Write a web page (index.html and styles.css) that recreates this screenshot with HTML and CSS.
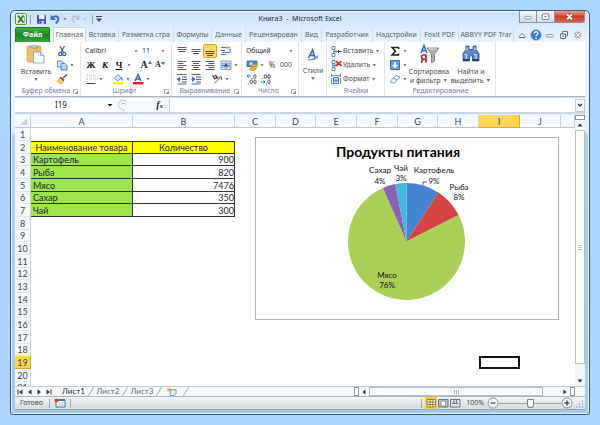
FILE: index.html
```
<!DOCTYPE html>
<html lang="ru">
<head>
<meta charset="utf-8">
<title>Книга3 - Microsoft Excel</title>
<link rel="stylesheet" href="styles.css">
</head>
<body>
<main class="window">
  <header class="titlebar">
    <div class="quick">
      <svg class="icon" viewBox="0 0 12 12"><rect x=".5" y=".5" width="11" height="11" rx="1.5" fill="#eef8ea" stroke="#4f9d4a"/><path d="M3 2.5L8.5 9.5M8.5 2.5L3 9.5" stroke="#23892b" stroke-width="2"/><path d="M9.500 3v7" stroke="#8cc487"/></svg>
      <i class="bar"></i>
      <button class="ico" aria-label="Сохранить"><svg class="icon" viewBox="0 0 12 12"><path d="M2 2h9v9H3L2 10z" fill="#4b52c4"/><path d="M4 2h5.500v4H4z" fill="#eef2fb"/><path d="M4.500 8h4.500v3h-4.500z" fill="#c9cfe6"/><path d="M5 8.500h1.500v2H5z" fill="#2c3191"/></svg></button>
      <button class="ico" aria-label="Отменить"><svg class="icon" viewBox="0 0 12 12"><path d="M3.500 4.500C8 1.500 11 5 8.500 8.500L6.500 10.500" fill="none" stroke="#3d72d9" stroke-width="2"/><path d="M1.500 1.500v5.500H7z" fill="#3d72d9"/></svg></button>
      <i class="caret"></i>
      <button class="ico" aria-label="Вернуть"><svg class="icon" viewBox="0 0 12 12"><path d="M9 4C5 1.500 2 5 4 8.500L6 10" fill="none" stroke="#b9c3d0" stroke-width="1.600"/><path d="M10.500 2v5H6z" fill="#b9c3d0"/></svg></button>
      <i class="caret caret-dim"></i>
      <i class="bar bar-end"></i>
      <button class="ico" aria-label="Настройка панели"><svg class="icon" viewBox="0 0 12 12"><path d="M1 3.500h6" stroke="#445"/><path d="M1 5.500h6L4 9z" fill="#445"/></svg></button>
    </div>
    <h1 class="title">Книга3 &nbsp;-&nbsp; Microsoft Excel</h1>
    <div class="winbtns">
      <button class="wb" aria-label="Свернуть"><svg viewBox="0 0 18 12"><rect x="5.500" y="6" width="7" height="3" rx="1" fill="#fff" stroke="#67727f" stroke-width=".8"/></svg></button>
      <button class="wb" aria-label="Развернуть"><svg viewBox="0 0 18 12"><rect x="5.500" y="3" width="7" height="6" rx="1" fill="#fff" stroke="#67727f"/><rect x="8" y="5.200" width="2" height="1.600" fill="#67727f"/></svg></button>
      <button class="wb wb-close" aria-label="Закрыть"><svg viewBox="0 0 30 12"><path d="M12.500 3.500l5 5M17.500 3.500l-5 5" stroke="#6d3a3a" stroke-width="3.200"/><path d="M12.500 3.500l5 5M17.500 3.500l-5 5" stroke="#fff" stroke-width="2"/></svg></button>
    </div>
  </header>

  <nav class="tabs">
    <button class="tab tab-file">Файл</button>
    <button class="tab tab-active">Главная</button>
    <button class="tab">Вставка</button>
    <button class="tab">Разметка стра</button>
    <button class="tab">Формулы</button>
    <button class="tab">Данные</button>
    <button class="tab">Рецензирован</button>
    <button class="tab">Вид</button>
    <button class="tab">Разработчик</button>
    <button class="tab">Надстройки</button>
    <button class="tab">Foxit PDF</button>
    <button class="tab">ABBYY PDF Trar</button>
    <div class="tabtools">
      <svg class="icon" viewBox="0 0 12 12"><path d="M3 7.500L6 4.500l3 3v1H3z" fill="#fff" stroke="#6b7683"/></svg>
      <svg class="icon" viewBox="0 0 12 12"><circle cx="6" cy="6" r="5.300" fill="#2f78dc" stroke="#7fb0ee" stroke-width=".8"/><path d="M4.200 4.600c0-2.500 3.800-2.300 3.700 0C7.900 5.900 6.100 5.900 6.100 7.300" fill="none" stroke="#fff" stroke-width="1.400"/><circle cx="6.100" cy="9.100" r=".9" fill="#fff"/></svg>
      <svg class="icon" viewBox="0 0 12 12"><rect x="2.500" y="5.500" width="7" height="2.500" rx=".8" fill="#fff" stroke="#6b7683" stroke-width=".8"/></svg>
      <svg class="icon" viewBox="0 0 12 12"><path d="M4.500 2.500h5v4.500h-5z" fill="#fff" stroke="#6b7683"/><path d="M2.500 5h5v4.500h-5z" fill="#fff" stroke="#6b7683"/><path d="M4 7.200h2" stroke="#6b7683"/></svg>
      <svg class="icon" viewBox="0 0 12 12"><path d="M3.500 3.500l5 5M8.500 3.500l-5 5" stroke="#6b7683" stroke-width="3"/><path d="M3.500 3.500l5 5M8.500 3.500l-5 5" stroke="#fff" stroke-width="1.300"/></svg>
    </div>
  </nav>

  <section class="ribbon">
    <div class="group">
      <div class="body clip">
        <button class="big big-paste"><svg viewBox="0 0 20 20"><rect x="1" y="2" width="14" height="16" rx="1" fill="#f1bd62" stroke="#d59a3c" stroke-width=".6"/><path d="M4.500 4V2.200H6.500a1.600 1.600 0 0 1 3 0h2V4z" fill="#d7d9dc" stroke="#7b838c" stroke-width=".6"/><path d="M7.500 8h7l3.500 3.500V19H7.500z" fill="#fbfdff" stroke="#6d9ad0" stroke-width=".8"/><path d="M14.500 8v3.500H18" fill="#cfe1f6" stroke="#6d9ad0" stroke-width=".8"/></svg><span>Вставить</span><i class="caret"></i></button>
        <div class="stack">
          <div class="row"><button class="ico" aria-label="Вырезать"><svg class="icon" viewBox="0 0 12 12"><path d="M4 1l3.500 6.500M8.500 1L5 7.500" stroke="#45658f" stroke-width="1.200"/><circle cx="4.200" cy="9" r="1.600" fill="none" stroke="#2c62c0" stroke-width="1.200"/><circle cx="8.200" cy="9" r="1.600" fill="none" stroke="#2c62c0" stroke-width="1.200"/></svg></button></div>
          <div class="row"><button class="ico" aria-label="Копировать"><svg class="icon" viewBox="0 0 12 12"><path d="M1.500 2h4l1.500 1.500V8H1.500z" fill="#dceafa" stroke="#3f78c9" stroke-width=".9"/><path d="M5 4.500h4l2 2V11H5z" fill="#b9d4f5" stroke="#3f78c9" stroke-width=".9"/></svg></button><i class="caret"></i></div>
          <div class="row"><button class="ico" aria-label="Формат по образцу"><svg class="icon" viewBox="0 0 12 12"><path d="M11 1.500L7 5" stroke="#8a5a2a" stroke-width="1.600"/><path d="M5 3.500l3.500 3.500-1 1.500-4-3.500z" fill="#555a66"/><path d="M4 5L7.500 8.500 5 11 1 8z" fill="#f7d04a" stroke="#c9941f" stroke-width=".6"/></svg></button></div>
        </div>
      </div>
      <div class="label">Буфер обмена<i class="launch"></i></div>
    </div>

    <div class="group">
      <div class="body stack">
        <div class="row"><select class="pick pick-font" aria-label="Шрифт"><option>Calibri</option></select><i class="caret"></i><select class="pick pick-size" aria-label="Размер"><option>11</option></select><i class="caret"></i></div>
        <div class="row"><button class="ico"><b>Ж</b></button><button class="ico"><b><em>К</em></b></button><button class="ico"><b><u>Ч</u></b></button><i class="caret"></i><i class="gap"></i><button class="ico glyph" aria-label="Увеличить размер">A<svg viewBox="0 0 4 8"><path d="M0 3L2 0l2 3z" fill="#2f6fd0"/></svg></button><button class="ico glyph glyph-s" aria-label="Уменьшить размер">A<svg viewBox="0 0 4 8"><path d="M0 1h4L2 4z" fill="#2f6fd0"/></svg></button></div>
        <div class="row"><button class="ico" aria-label="Границы"><svg class="icon" viewBox="0 0 12 12"><path d="M2 2h8v8M2 2v8M6 2v8M2 6h8" fill="none" stroke="#b8bec6" stroke-width=".9" stroke-dasharray="1 1"/><path d="M1.500 10.500h9" stroke="#444"/></svg></button><i class="caret"></i><i class="gap"></i><button class="ico" aria-label="Цвет заливки"><svg class="icon" viewBox="0 0 12 12"><path d="M2.500 5L6 1.500 9 5 5.500 8z" fill="#dfeafa" stroke="#4576b8" stroke-width=".9"/><path d="M9.500 4c1.500 1.200 1.500 2.500 1 4-1-1-1.500-2-1-4z" fill="#3572d0"/><path d="M1 9h10.500v2.500H1z" fill="#fff200"/></svg></button><i class="caret"></i><button class="ico" aria-label="Цвет текста"><svg class="icon" viewBox="0 0 12 12"><path d="M3 8L6 1.500 9 8M4.200 6h3.600" fill="none" stroke="#3d5fa8" stroke-width="1.500"/><path d="M1 9h10.500v2.500H1z" fill="#ee1c1c"/></svg></button><i class="caret"></i></div>
      </div>
      <div class="label">Шрифт<i class="launch"></i></div>
    </div>

    <div class="group">
      <div class="body stack">
        <div class="row"><button class="ico" aria-label="По верхнему краю"><svg class="icon" viewBox="0 0 12 12"><path d="M1.500 2.500h9M1.500 4.500h9M3 6.500h6" stroke="#5a6068"/></svg></button><button class="ico" aria-label="По середине"><svg class="icon" viewBox="0 0 12 12"><path d="M1.500 4.500h9M1.500 6.500h9M3 8.500h6" stroke="#5a6068"/></svg></button><button class="ico ico-on" aria-label="По нижнему краю"><svg class="icon" viewBox="0 0 12 12"><path d="M1.500 6.500h9M1.500 8.500h9M3 10.500h6" stroke="#5d4a10"/></svg></button><i class="thin"></i><button class="ico" aria-label="Перенос текста"><svg class="icon" viewBox="0 0 12 12"><path d="M1 2.500h9M1 5.500h4M1 9.500h5" stroke="#666c78"/><path d="M2 7.500h6.500c2.500 0 2.500-3.500 0-3.500" fill="none" stroke="#4b82c9" stroke-width="1.200"/><path d="M6.500 1v3l3-1.500z" fill="#e5a13c"/></svg></button></div>
        <div class="row"><button class="ico" aria-label="По левому краю"><svg class="icon" viewBox="0 0 12 12"><path d="M1.500 2.500h9M1.500 4.500h6M1.500 6.500h9M1.500 8.500h6M1.500 10.500h9" stroke="#5a6068"/></svg></button><button class="ico" aria-label="По центру"><svg class="icon" viewBox="0 0 12 12"><path d="M1.500 2.500h9M3 4.500h6M1.500 6.500h9M3 8.500h6M1.500 10.500h9" stroke="#5a6068"/></svg></button><button class="ico" aria-label="По правому краю"><svg class="icon" viewBox="0 0 12 12"><path d="M1.500 2.500h9M4.500 4.500h6M1.500 6.500h9M4.500 8.500h6M1.500 10.500h9" stroke="#5a6068"/></svg></button><i class="thin"></i><button class="ico" aria-label="Объединить"><svg class="icon" viewBox="0 0 12 12"><path d="M1 2h10v8.500H1z" fill="#dbe8f8" stroke="#7795bf" stroke-width=".9"/><path d="M1 4.500h10M1 8h10M6 2v2.500M6 8v2.500" stroke="#7795bf" stroke-width=".8"/><path d="M2 6.300h8" stroke="#2860b8"/><path d="M5 7.800L6 5l1 2.800" fill="none" stroke="#234" stroke-width=".9"/></svg></button><i class="caret"></i></div>
        <div class="row"><button class="ico" aria-label="Уменьшить отступ"><svg class="icon" viewBox="0 0 12 12"><path d="M1.500 1.500h9M6 4h5M6 6.500h5M6 9h5M1.500 11h9" stroke="#5a6068"/><path d="M5 6.300H2M3.500 4L1 6.300 3.500 8.600z" fill="#2f6fd0" stroke="#2f6fd0" stroke-width=".8"/></svg></button><button class="ico" aria-label="Увеличить отступ"><svg class="icon" viewBox="0 0 12 12"><path d="M1.500 1.500h9M6 4h5M6 6.500h5M6 9h5M1.500 11h9" stroke="#5a6068"/><path d="M1 6.300h3M2.500 4L5 6.300 2.500 8.600z" fill="#2f6fd0" stroke="#2f6fd0" stroke-width=".8"/></svg></button><i class="gap"></i><button class="ico" aria-label="Ориентация"><svg class="icon" viewBox="0 0 12 12"><path d="M3 10.500L10.500 4M10.500 4H7.500M10.500 4v3" fill="none" stroke="#6b7077"/><path d="M1.500 2.500l2 3M4.500 2l2.500 4M2 4c1.500-1.500 3-1.500 4-.5M3 6c1.500-1 2.500-1 4-1.500" fill="none" stroke="#33383e" stroke-width="1.100"/></svg></button><i class="caret"></i></div>
      </div>
      <div class="label">Выравнивание<i class="launch"></i></div>
    </div>

    <div class="group">
      <div class="body stack">
        <div class="row"><select class="pick pick-format" aria-label="Числовой формат"><option>Общий</option></select><i class="caret"></i></div>
        <div class="row"><button class="ico" aria-label="Финансовый формат"><svg class="icon" viewBox="0 0 12 12"><path d="M1 2h10v5.500H1z" fill="#4f86cf" stroke="#2a579a" stroke-width=".7"/><circle cx="5" cy="4.700" r="1.600" fill="#d9e8fb"/><ellipse cx="8.500" cy="6.500" rx="3" ry="1.300" fill="#f3c13a" stroke="#a87b12" stroke-width=".6"/><ellipse cx="8" cy="8.500" rx="3" ry="1.300" fill="#f3c13a" stroke="#a87b12" stroke-width=".6"/><ellipse cx="6.500" cy="10.300" rx="3" ry="1.300" fill="#f3c13a" stroke="#a87b12" stroke-width=".6"/></svg></button><i class="caret"></i><button class="ico percent">%</button><button class="ico">000</button></div>
        <div class="row"><button class="ico" aria-label="Увеличить разрядность"><svg class="icon" viewBox="0 0 12 12"><path d="M1 3h4M2.500 1.500L1 3l1.500 1.500" fill="none" stroke="#2f6fd0"/><g fill="none" stroke="#444a52" stroke-width=".9"><ellipse cx="8.800" cy="3.500" rx="1.200" ry="1.900"/><ellipse cx="5.300" cy="8.800" rx="1.200" ry="1.900"/><ellipse cx="9" cy="8.800" rx="1.200" ry="1.900"/><path d="M2.300 10.500v1M6 5v1"/></g></svg></button><button class="ico" aria-label="Уменьшить разрядность"><svg class="icon" viewBox="0 0 12 12"><path d="M1 9h4M3.500 7.500L5 9l-1.500 1.500" fill="none" stroke="#2f6fd0"/><g fill="none" stroke="#444a52" stroke-width=".9"><ellipse cx="5.300" cy="3.500" rx="1.200" ry="1.900"/><ellipse cx="9" cy="3.500" rx="1.200" ry="1.900"/><ellipse cx="9" cy="8.800" rx="1.200" ry="1.900"/><path d="M2.300 5v1M6.500 10.500v1"/></g></svg></button></div>
      </div>
      <div class="label">Число<i class="launch"></i></div>
    </div>

    <div class="group">
      <button class="big big-styles"><svg viewBox="0 0 14 14"><path d="M2.500 10L6.500 2 9 10M4 7.500h4" fill="none" stroke="#3765b5" stroke-width="1.600"/><path d="M8 9.500L12 7v3l-4 2z" fill="#6fa0e4"/><path d="M2 11.500c3 1.500 4-1 7-.5" fill="none" stroke="#4a82d2" stroke-width="1.200"/></svg><span>Стили</span><i class="caret"></i></button>
      <div class="label"></div>
    </div>

    <div class="group">
      <div class="body stack">
        <div class="row"><button class="cmd"><svg class="icon" viewBox="0 0 12 12"><path d="M2 1.500h3v3H2zM2 8.500h3v3H2z" fill="#fff" stroke="#5e7ba8" stroke-width=".9"/><path d="M3 5.500h4v2H3z" fill="#4a86d6"/><path d="M8 6.500h3.500M9 5L7.500 6.500 9 8" fill="none" stroke="#334a6b"/></svg>Вставить<i class="caret"></i></button></div>
        <div class="row"><button class="cmd"><svg class="icon" viewBox="0 0 12 12"><path d="M2 1.500h3v3H2zM2 8.500h3v3H2z" fill="#fff" stroke="#5e7ba8" stroke-width=".9"/><path d="M2 5.500h4v2H2z" fill="#4a86d6"/><path d="M6 2l5.500 5M11.500 2L6 7" stroke="#e0342b" stroke-width="1.700"/></svg>Удалить<i class="caret"></i></button></div>
        <div class="row"><button class="cmd"><svg class="icon" viewBox="0 0 12 12"><path d="M1.500 2.500h9M1.500 1v3M10.500 1v3M1.500 5v6M1.500 11h2M10.500 5v6" stroke="#5b8ed6" stroke-width=".9"/><path d="M3.500 4.500h5v6h-5z" fill="#d7e6fa" stroke="#3f6fb8" stroke-width=".9"/><path d="M4.500 6.500h3v2h-3z" fill="#3f78cc"/></svg>Формат<i class="caret"></i></button></div>
      </div>
      <div class="label">Ячейки</div>
    </div>

    <div class="group">
      <div class="body edit">
        <div class="stack">
          <div class="row"><button class="ico" aria-label="Сумма"><svg class="icon" viewBox="0 0 12 12"><path d="M9.500 4V2.500H3L6.500 6.200 3 10h6.500V8.500" fill="none" stroke="#222" stroke-width="1.500"/></svg></button><i class="caret"></i></div>
          <div class="row"><button class="ico" aria-label="Заполнить"><svg class="icon" viewBox="0 0 12 12"><path d="M1.500 1.500h9v9h-9z" fill="#5e9cea" stroke="#2d63b5" stroke-width=".9"/><path d="M5 3h2v3h2L6 9.500 3 6h2z" fill="#fff"/></svg></button><i class="caret"></i></div>
          <div class="row"><button class="ico" aria-label="Очистить"><svg class="icon" viewBox="0 0 12 12"><path d="M1.500 8L7 2.500 11 4 5.500 10H2.500z" fill="#f5f8fd" stroke="#5c7fb5" stroke-width=".9"/><path d="M4.500 5L8 7" stroke="#5c7fb5" stroke-width=".9"/></svg></button><i class="caret"></i></div>
        </div>
        <button class="big big-wide"><svg viewBox="0 0 20 20"><path d="M8 4h12l-4.500 6v7l-3 2V10z" fill="#a9afb6" stroke="#6f767e" stroke-width=".8"/><path d="M10 5h8" stroke="#e4e7ea"/><path d="M2 9L5 1.500 8 9M3.200 6.500h3.600" fill="none" stroke="#2f66c4" stroke-width="1.500"/><path d="M7 18.500v-7.500H4.500a2 2 0 0 0 0 4H7M4.500 15L2 18.500" fill="none" stroke="#b02a2a" stroke-width="1.700"/></svg><span>Сортировка</span><span>и фильтр <i class="caret"></i></span></button>
        <button class="big big-wide"><svg viewBox="0 0 20 20"><path d="M5 2h3v3.500h4V2h3v3.500l3 4V17h-6.500v-5h-3v5H2V9.500l3-4z" fill="#5e88c7" stroke="#2b4f8c" stroke-width=".8"/><path d="M3.500 10.500h2V15M6 3.500v2.500M14 3.500v2.500M13 10.500h2V15" fill="none" stroke="#c9dbf4" stroke-width="1.200"/><path d="M2 15h6.500v2H2zM11.500 15H18v2h-6.500z" fill="#24437c"/></svg><span>Найти и</span><span>выделить <i class="caret"></i></span></button>
      </div>
      <div class="label">Редактирование</div>
    </div>
  </section>

  <section class="formula">
    <input class="namebox" aria-label="Имя ячейки" value="I19">
    <i class="caret caret-dark"></i>
    <div class="fx"><svg viewBox="0 0 14 12"><path d="M9 2C3 0 0 4 2 8c1 2 3 3 6 3" fill="none" stroke="#b8c2ce"/><path d="M4.500 5.500c1-1.500 3-1.500 4 0" fill="none" stroke="#9aa5b3"/></svg><em>f<small>x</small></em></div>
    <input class="formula-input" aria-label="Строка формул">
    <button class="expand" aria-label="Развернуть строку"><svg viewBox="0 0 8 8"><path d="M2 3l2 2 2-2" fill="none" stroke="#333" stroke-width="1.400"/></svg></button>
  </section>

  <section class="work">
    <div class="sheet">
      <table class="grid">
        <colgroup><col class="c-head"><col class="c-wide"><col class="c-wide"><col class="c-std"><col class="c-slim"><col class="c-std"><col class="c-std"><col class="c-slim"><col class="c-std"><col class="c-std"><col class="c-std"><col></colgroup>
        <thead><tr><th class="corner"><svg viewBox="0 0 16 12"><path d="M13 3v7H6z" fill="#c5ccd5"/></svg></th><th>A</th><th>B</th><th>C</th><th>D</th><th>E</th><th>F</th><th>G</th><th>H</th><th class="hot">I</th><th>J</th><th></th></tr></thead>
        <tbody>
          <tr><th>1</th></tr>
          <tr class="names"><th>2</th><td>Наименование товара</td><td>Количество</td></tr>
          <tr class="item"><th>3</th><td>Картофель</td><td>900</td></tr>
          <tr class="item"><th>4</th><td>Рыба</td><td>820</td></tr>
          <tr class="item"><th>5</th><td>Мясо</td><td>7476</td></tr>
          <tr class="item"><th>6</th><td>Сахар</td><td>350</td></tr>
          <tr class="item"><th>7</th><td>Чай</td><td>300</td></tr>
          <tr><th>8</th></tr>
          <tr><th>9</th></tr>
          <tr><th>10</th></tr>
          <tr><th>11</th></tr>
          <tr><th>12</th></tr>
          <tr><th>13</th></tr>
          <tr><th>14</th></tr>
          <tr><th>15</th></tr>
          <tr><th>16</th></tr>
          <tr><th>17</th></tr>
          <tr><th>18</th></tr>
          <tr><th class="hot">19</th><td colspan="8"></td><td class="cursor"></td></tr>
          <tr><th>20</th></tr>
          <tr><th>21</th></tr>
        </tbody>
      </table>
      <svg class="chart" viewBox="0 0 304 183">
        <rect x=".5" y=".5" width="303" height="182" fill="#fff" stroke="#b4b4b4"/>
        <text class="chart-title" x="143" y="20">Продукты питания</text>
        <g transform="translate(151.500 104.500)">
          <path d="M0 0V-58.500A58.500 58.500 0 0 1 31.800-49.100z" fill="#4584d0"/>
          <path d="M0 0L31.800-49.100A58.500 58.500 0 0 1 52.100-26.600z" fill="#d44441"/>
          <path d="M0 0L52.100-26.600A58.500 58.500 0 1 1-23.600-53.500z" fill="#aacf56"/>
          <path d="M0 0L-23.600-53.500A58.500 58.500 0 0 1-11.200-57.400z" fill="#8a63b3"/>
          <path d="M0 0L-11.200-57.400A58.500 58.500 0 0 1 0-58.500z" fill="#42b8dc"/>
        </g>
        <path d="M168 48v-3h4" fill="none" stroke="#333" stroke-width=".8"/>
        <g class="chart-label">
          <text x="125" y="36">Сахар</text><text x="125" y="47">4%</text>
          <text x="146" y="34">Чай</text><text x="146" y="44">3%</text>
          <text x="179" y="36">Картофель</text><text x="179" y="47">9%</text>
          <text x="204" y="53">Рыба</text><text x="204" y="63">8%</text>
          <text x="132" y="141">Мясо</text><text x="132" y="151">76%</text>
        </g>
      </svg>
    </div>
    <div class="vscroll">
      <i class="split-h"></i>
      <button class="arrow" aria-label="Вверх"><svg viewBox="0 0 8 8"><path d="M1.500 5.500L4 2.500l2.500 3z" fill="#333"/></svg></button>
      <div class="vthumb"><svg viewBox="0 0 6 6"><path d="M1 1.500h4M1 3.500h4M1 5.500h4" stroke="#a8b0ba" stroke-width=".8"/></svg></div>
      <i class="vrest"></i>
      <button class="arrow" aria-label="Вниз"><svg viewBox="0 0 8 8"><path d="M1.500 2.500L4 5.500l2.500-3z" fill="#333"/></svg></button>
    </div>
  </section>

  <footer class="sheetbar">
    <div class="navs">
      <svg viewBox="0 0 8 8"><path d="M2 1.500v5" stroke="#333"/><path d="M6.500 1.500v5L3 4z" fill="#333"/></svg>
      <svg viewBox="0 0 8 8"><path d="M5.500 1.500v5L2 4z" fill="#333"/></svg>
      <svg viewBox="0 0 8 8"><path d="M2.500 1.500v5L6 4z" fill="#333"/></svg>
      <svg viewBox="0 0 8 8"><path d="M6 1.500v5" stroke="#333"/><path d="M1.500 1.500v5L5 4z" fill="#333"/></svg>
    </div>
    <button class="stab stab-on">Лист1</button>
    <svg class="slant" viewBox="0 0 6 10"><path d="M0 0v10L6 0z" fill="#fff"/><path d="M0 10L6 0" stroke="#98a3b0"/></svg>
    <button class="stab">Лист2</button>
    <svg class="slant" viewBox="0 0 6 10"><path d="M0 10L6 0" stroke="#98a3b0"/></svg>
    <button class="stab">Лист3</button>
    <svg class="slant" viewBox="0 0 6 10"><path d="M0 10L6 0" stroke="#98a3b0"/></svg>
    <button class="stab stab-new" aria-label="Новый лист"><svg viewBox="0 0 12 10"><path d="M4 3h6.500v5l-2 1.500H4z" fill="#e8f0fb" stroke="#5f7fb0" stroke-width=".9"/><path d="M3 .5v5M.5 3h5M1.200 1.200l3.600 3.600M4.800 1.200L1.200 4.800" stroke="#f0a51e" stroke-width="1"/></svg></button>
    <svg class="slant" viewBox="0 0 6 10"><path d="M0 10L6 0" stroke="#98a3b0"/></svg>
    <div class="hfill"></div>
    <i class="split-v"></i>
    <button class="arrow" aria-label="Влево"><svg viewBox="0 0 8 8"><path d="M5.500 1.500v5L2.500 4z" fill="#333"/></svg></button>
    <div class="hthumb"><svg viewBox="0 0 6 6"><path d="M1.500 1v4M3.500 1v4M5.500 1v4" stroke="#98a1ac" stroke-width=".8"/></svg></div>
    <i class="hrest"></i>
    <button class="arrow" aria-label="Вправо"><svg viewBox="0 0 8 8"><path d="M2.500 1.500v5l3-2.500z" fill="#333"/></svg></button>
    <i class="split-v"></i>
    <i class="edge"></i>
  </footer>

  <footer class="status">
    <span class="ready">Готово</span>
    <i class="bar"></i>
    <button class="ico" aria-label="Запись макроса"><svg class="icon" viewBox="0 0 12 12"><path d="M2 2.500h9v7.500H2z" fill="#fff" stroke="#3f6fb8"/><path d="M2 3h9" stroke="#3f78cc" stroke-width="2"/><path d="M4 6h6M4 8h6" stroke="#9cb6de" stroke-width=".8"/><circle cx="2.500" cy="3.500" r="2" fill="#e0402f"/></svg></button>
    <i class="bar"></i>
    <div class="spring"></div>
    <i class="bar"></i>
    <div class="views">
      <button class="view view-on" aria-label="Обычный"><svg class="icon" viewBox="0 0 12 12"><path d="M2 2.500h8.500v7.500H2zM2 5h8.500M2 7.500h8.500M5 2.500V10M7.800 2.500V10" fill="#fffbe6" stroke="#8a7430" stroke-width=".9"/></svg></button>
      <button class="view" aria-label="Разметка страницы"><svg class="icon" viewBox="0 0 12 12"><path d="M1.500 2.500h9.500v7.500H1.500z" fill="#b9bfc7" stroke="#6c737c"/><path d="M4 4h4.500v5H4z" fill="#fff" stroke="#7b828b" stroke-width=".8"/></svg></button>
      <button class="view" aria-label="Страничный режим"><svg class="icon" viewBox="0 0 12 12"><path d="M1.500 2.500h9.500v7.500H1.500z" fill="#e4e7eb" stroke="#6c737c"/><path d="M5 2.500v4M7.500 2.500v4M3 6.500h6.500" stroke="#6c737c"/></svg></button>
    </div>
    <label class="pct" for="zoom">100%</label>
    <button class="round" aria-label="Уменьшить"><svg viewBox="0 0 12 12"><circle cx="6" cy="6" r="5" fill="#fafbfc" stroke="#7c8590" stroke-width=".9"/><path d="M3.500 6h5" stroke="#444" stroke-width="1.300"/></svg></button>
    <input class="zoom" id="zoom" type="range" min="0" max="100" value="50">
    <button class="round" aria-label="Увеличить"><svg viewBox="0 0 12 12"><circle cx="6" cy="6" r="5" fill="#fafbfc" stroke="#7c8590" stroke-width=".9"/><path d="M3.500 6h5M6 3.500v5" stroke="#444" stroke-width="1.300"/></svg></button>
    <svg class="grip" viewBox="0 0 12 12"><path d="M9 4h1M9 7h1M6 7h1M9 10h1M6 10h1M3 10h1" stroke="#9aa5b2" stroke-width="1.500"/></svg>
  </footer>
</main>
</body>
</html>
```
FILE: styles.css
```
* { box-sizing: border-box; }

body {
  margin: 0;
  padding: 10px;
  height: 100vh;
  background: #abd5ff;
  color: #454d58;
  font: 7px/10px "Noto Sans", "Open Sans", sans-serif;
}

button, input, select {
  margin: 0;
  padding: 0;
  border: 0;
  background: none;
  color: inherit;
  font: inherit;
  appearance: none;
}

svg { display: block; }

.window {
  display: flex;
  flex-direction: column;
  height: 100%;
  padding: 0 4px 4px;
  border: 1px solid #4a5663;
  border-radius: 5px 5px 3px 3px;
  background: linear-gradient(#c6e1fa, #eaf4fd 30px, #e4f1fd 120px, #a9d2fa 125px, #9ccbf8);
  box-shadow: inset 0 0 0 1px #e9f5ff;
}

/* Shared small parts */
.icon { width: 12px; height: 12px; }
.ico { display: flex; flex: none; align-items: center; justify-content: center; width: 14px; height: 14px; }
.caret { flex: none; width: 6px; height: 3px; background: #6a727c; clip-path: polygon(20% 0, 80% 0, 50% 100%); }
.caret-dim { background: #b9c3d0; }
.caret-dark { background: #111; clip-path: polygon(0 0, 100% 0, 50% 100%); }
.bar { flex: none; width: 1px; height: 9px; margin: 0 3px; background: #98a6b5; }
.bar-end { margin: 0 1px 0 4px; }
.gap { flex: none; width: 7px; }
.thin { flex: none; width: 2px; }
.arrow { flex: none; width: 10px; height: 10px; padding: 1px; }

/* Title bar */
.titlebar { display: flex; flex: none; height: 16px; align-items: center; }
.quick { display: flex; flex: 1; align-items: center; height: 16px; }
.title { margin: 0; color: #222a35; font: 7px/12px "Noto Sans", sans-serif; }
.winbtns { display: flex; flex: 1; justify-content: flex-end; align-self: flex-start; }
.wb { width: 18px; height: 12px; border: 1px solid #8793a1; border-top: 0; background: linear-gradient(#f3f8fd, #cfdeed); }
.wb + .wb { border-left: 0; }
.wb-close { width: 30px; border-radius: 0 0 3px 0; background: linear-gradient(#eba28f, #c8402b 50%, #d9604a); }

/* Ribbon tabs */
.tabs {
  display: grid;
  flex: none;
  grid-template-columns: 35px 36px 33px 55px 38px 34px 56px 20px 51px 48px 38px 55px 1fr;
  height: 15px;
}
.tab { overflow: hidden; border-right: 1px solid #d3dde8; color: #565f6b; text-align: center; white-space: nowrap; }
.tab-file { border: 1px solid #1d7a26; border-bottom: 0; border-radius: 2px 2px 0 0; background: linear-gradient(#3fae3d, #17841f 50%, #3aa83a); color: #fff; font-weight: bold; }
.tab-active { margin-left: 3px; border: 1px solid #cdd7e2; border-bottom: 0; border-radius: 2px 2px 0 0; background: #fff; }
.tabtools { display: flex; align-items: center; justify-content: space-between; padding: 0 1px 0 2px; }

/* Ribbon */
.ribbon {
  display: grid;
  flex: none;
  grid-template-columns: 66px 91px 70px 57px 28px 58px 111px 1fr;
  height: 55px;
  border-bottom: 1px solid #a9b4c1;
  background: #fff;
}
.group { display: flex; flex-direction: column; padding: 2px 2px 0 3px; border-right: 1px solid #e1e6ec; }
.body { height: 42px; }
.stack { display: flex; flex-direction: column; }
.row { display: flex; align-items: center; height: 14px; }
.clip, .edit { display: flex; }
.label { display: flex; align-items: center; justify-content: center; height: 10px; color: #7281a0; white-space: nowrap; }
.launch { width: 5px; height: 5px; margin-left: auto; border: 1px solid #aab4c2; border-width: 1px 0 0 1px; background: linear-gradient(135deg, transparent 60%, #8793a3 60%); }
.label:has(.launch)::before { content: ""; width: 1px; margin-right: auto; }
.big { display: flex; flex-direction: column; align-items: center; height: 42px; line-height: 9px; white-space: nowrap; }
.big svg { flex: none; width: 20px; height: 20px; margin-bottom: 3px; }
.big .caret { display: inline-block; margin: 2px 0; }
.big span .caret { margin: 1px 0; }
.big-paste { width: 36px; }
.big-styles { width: 22px; }
.big-styles svg { width: 14px; height: 14px; margin: 4px 0; }
.big-wide { width: 42px; }
.clip .stack { margin-left: 1px; }
.pick { color: #2a3038; }
.pick-font { width: 49px; padding-left: 1px; }
.pick-size { width: 21px; padding-left: 3px; }
.pick-format { width: 43px; padding-left: 1px; }
.ico b { color: #111; font: bold 9px/12px "Liberation Serif", serif; }
.glyph { color: #222; font: bold 10px/12px "Liberation Serif", serif; }
.glyph-s { font-size: 8px; }
.glyph svg { width: 4px; height: 8px; }
.ico-on { border: 1px solid #d9a432; border-radius: 2px; background: #ffd860; }
.percent { font-size: 8px; }
.cmd { display: flex; align-items: center; gap: 1px; white-space: nowrap; }

/* Formula bar */
.formula { display: flex; flex: none; align-items: center; height: 17px; margin-bottom: 1px; border-top: 1px solid #d5dee8; border-bottom: 2px solid #cbd6e2; background: #fff; }
.namebox { width: 92px; text-align: center; font-size: 8px; color: #222; }
.fx { display: flex; align-items: center; justify-content: space-between; width: 57px; height: 14px; padding: 0 6px 0 4px; border-right: 1px solid #c6d0db; background: #f7fafd; color: #222; }
.fx svg { width: 14px; height: 12px; }
.fx em { font: italic bold 10px/12px "Liberation Serif", serif; }
.fx small { font-size: 7px; }
.formula-input { flex: 1; min-width: 0; height: 14px; }
.expand { width: 10px; height: 13px; border: 1px solid #c2ccd8; background: #f5f8fc; }

/* Worksheet */
.work { display: flex; flex: 1; min-height: 0; background: #fff; }
.sheet { position: relative; flex: 1; min-width: 0; overflow: hidden; }
.grid { width: 100%; border-spacing: 0; table-layout: fixed; color: #1c2430; font: 9px/11px Lato, "Open Sans", sans-serif; }
.grid td, .grid th { padding: 0; white-space: nowrap; }
.grid th { border-right: 1px solid #c9d3de; border-bottom: 1px solid #dfe6ee; background: #f5f9fd; color: #3d4650; font-weight: normal; text-align: center; }
.grid thead th { height: 13px; border-bottom-color: #b9c5d2; }
.grid tbody tr { height: 13px; }
.grid tbody tr:nth-child(3n) { height: 12px; }
.grid .hot { border-color: #e0a43a; background: #ffd64d; }
.corner svg { width: 15px; height: 12px; }
.c-head { width: 16px; }
.c-wide { width: 102px; }
.c-std { width: 41px; }
.c-slim { width: 40px; }
.names td { border: 1px solid #333; border-left: 0; background: #ff0; text-align: center; }
.item td { border: 1px solid #333; border-width: 0 1px 1px 0; text-align: right; }
.item td:nth-child(2) { padding-left: 2px; background: #9de54a; text-align: left; }
.grid tr .cursor { border: 2px solid #111; }

.chart { position: absolute; top: 22px; left: 240px; width: 304px; height: 183px; font-family: Lato, "Open Sans", sans-serif; text-anchor: middle; }
.chart-title { fill: #000; font-size: 14px; font-weight: bold; }
.chart-label { fill: #111; font-size: 8px; }

.vscroll { display: flex; flex: none; flex-direction: column; width: 10px; background: #f1f5f9; }
.split-h { height: 5px; border: 1px solid #8a949f; background: #fff; }
.vthumb { display: flex; flex: 20; align-items: center; justify-content: center; border: 1px solid #b4bfcb; background: #fdfeff; }
.vthumb svg, .hthumb svg { width: 6px; height: 6px; }
.vrest { flex: 1; }

/* Sheet tabs */
.sheetbar { display: flex; flex: none; align-items: center; height: 11px; border-top: 1px solid #c3ccd6; border-bottom: 1px solid #a9b4c1; background: #f6faff; }
.navs { display: flex; width: 39px; justify-content: space-between; padding: 0 1px; }
.navs svg { width: 8px; height: 8px; }
.stab { width: 28px; color: #5d6771; font: 8px/9px Lato, "Open Sans", sans-serif; }
.stab-on { width: 34px; padding-left: 5px; background: #fff; color: #222; }
.stab-new { width: 21px; padding-left: 4px; }
.stab svg { width: 12px; height: 9px; }
.slant { flex: none; width: 6px; height: 9px; }
.hfill { flex: 170; }
.split-v { width: 5px; height: 9px; border: 1px solid #8a949f; background: #fff; }
.hthumb { display: flex; flex: 176; height: 9px; align-items: center; justify-content: center; border: 1px solid #b4bfcb; background: #fff; }
.hrest { flex: 18; }
.edge { width: 10px; }

/* Status bar */
.status { display: flex; flex: none; align-items: center; height: 13px; background: linear-gradient(#f4f6f8, #d3d9de); border-bottom: 1px solid #9fabb8; }
.ready { width: 31px; padding-left: 5px; }
.spring { flex: 1; }
.views { display: flex; }
.view { width: 12px; height: 12px; }
.view-on { background: #ffcf3f; }
.pct { padding: 0 3px 0 5px; }
.round { width: 12px; height: 12px; }
.zoom { width: 62px; height: 12px; background: linear-gradient(#9aa5b1, #9aa5b1) center / 100% 1px no-repeat; }
.zoom::-webkit-slider-thumb { width: 7px; height: 9px; border: 1px solid #77818c; border-radius: 1px 1px 4px 4px; background: #fafbfc; appearance: none; }
.grip { width: 12px; height: 12px; }
```
